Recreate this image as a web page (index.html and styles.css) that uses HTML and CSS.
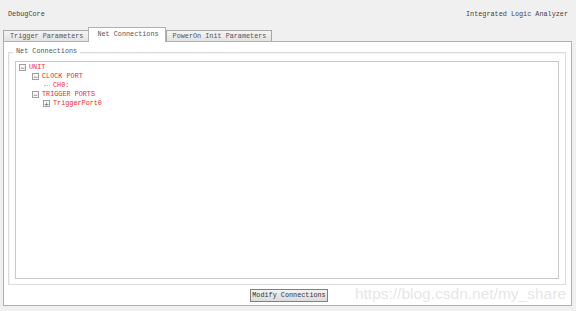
FILE: index.html
```html
<!DOCTYPE html>
<html>
<head>
<meta charset="utf-8">
<link rel="stylesheet" href="styles.css">
</head>
<body>
<div class="app">
  <div class="header">
    <span>DebugCore</span>
    <span>Integrated Logic Analyzer</span>
  </div>
  <div class="tabs">
    <div class="tab">Trigger Parameters</div>
    <div class="tab active">Net Connections</div>
    <div class="tab">PowerOn Init Parameters</div>
  </div>
  <div class="panel">
    <div class="group">
      <div class="legend">Net Connections</div>
      <div class="tree">
        <div class="node lvl0"><span class="box">−</span><span class="lbl">UNIT</span></div>
        <div class="node lvl1"><span class="box">−</span><span class="lbl">CLOCK PORT</span></div>
        <div class="node lvl2"><span class="leafline"></span><span class="lbl">CH0:</span></div>
        <div class="node lvl1"><span class="box">−</span><span class="lbl">TRIGGER PORTS</span></div>
        <div class="node lvl2b"><span class="box">+</span><span class="lbl">TriggerPort0</span></div>
      </div>
    </div>
    <div class="actions">
      <button class="btn">Modify Connections</button>
    </div>
    <div class="watermark">https://blog.csdn.net/my_share</div>
  </div>
</div>
</body>
</html>
```
FILE: styles.css
```css
html, body {
  margin: 0;
  padding: 0;
}
body {
  width: 576px;
  height: 311px;
  background: #f0f0f0;
  font-family: "Liberation Mono", "DejaVu Sans Mono", monospace;
  font-size: 6.8px;
  color: #444;
  overflow: hidden;
}
.app {
  display: flex;
  flex-direction: column;
  height: 311px;
}
.header {
  display: flex;
  justify-content: space-between;
  padding: 10px 8px 0 8px;
  height: 17px;
  line-height: 8px;
  color: #444;
}
.tabs {
  display: flex;
  align-items: flex-end;
  padding-left: 3px;
  height: 14px;
  position: relative;
  z-index: 1;
}
.tab {
  height: 10px;
  line-height: 10px;
  padding: 0 5px 0 6px;
  border: 1px solid #a8a8a8;
  border-bottom: none;
  background: linear-gradient(#f4f4f4, #e2e2e2);
  color: #555;
}
.tab.active {
  height: 14px;
  line-height: 13px;
  background: #fff;
  padding: 0 6px 0 8px;
  margin-bottom: -1px;
  border-color: #b0b0b0;
}
.tab + .tab { margin-left: -1px; }
.tab.active + .tab { margin-left: 0; }
.panel {
  position: relative;
  margin: 0 4px 5px 3px;
  flex: 1;
  background: #fff;
  border: 1px solid #b0b0b0;
  display: flex;
  flex-direction: column;
}
.group {
  position: relative;
  margin: 10px 5px 0 4px;
  border: 1px solid #dcdcdc;
  box-shadow: 1px 1px 0 #f3f3f3 inset;
  padding: 8px 6px 5px 6px;
  height: 218px;
}
.legend {
  position: absolute;
  top: -6px;
  left: 4px;
  padding: 0 3px;
  background: #fff;
  line-height: 9px;
  color: #555;
}
.tree {
  height: 215px;
  border: 1px solid #c8c8c8;
  background: #fff;
  padding-top: 1px;
  color: #f02a2a;
}
.node {
  display: flex;
  align-items: center;
  height: 9px;
  line-height: 9px;
}
.lvl0 { padding-left: 3px; }
.lvl1 { padding-left: 16px; }
.lvl2 { padding-left: 27px; }
.lvl2b { padding-left: 27px; }
.box {
  width: 5px;
  height: 5px;
  border: 1px solid #a0a0a0;
  font-size: 6px;
  line-height: 5px;
  text-align: center;
  color: #444;
  background: #f8f8f8;
  margin-right: 3px;
  font-family: "DejaVu Sans", sans-serif;
  overflow: hidden;
}
.leafline {
  width: 6px;
  border-top: 1px dotted #c0c0c0;
  margin-right: 3px;
  margin-left: 1px;
}
.lbl { white-space: pre; }
.actions {
  display: flex;
  justify-content: center;
  padding-top: 4px;
}
.btn {
  font: inherit;
  color: #333;
  height: 13px;
  padding: 0 1px;
  line-height: 11px;
  border: 1px solid #808080;
  background: linear-gradient(#f2f2f2, #dcdcdc);
  border-radius: 0;
  margin-left: 3px;
}
.watermark {
  position: absolute;
  right: 5px;
  bottom: 2px;
  font-family: "Liberation Sans", Arial, sans-serif;
  font-size: 15.5px;
  color: rgba(190,190,190,0.4);
}
```
